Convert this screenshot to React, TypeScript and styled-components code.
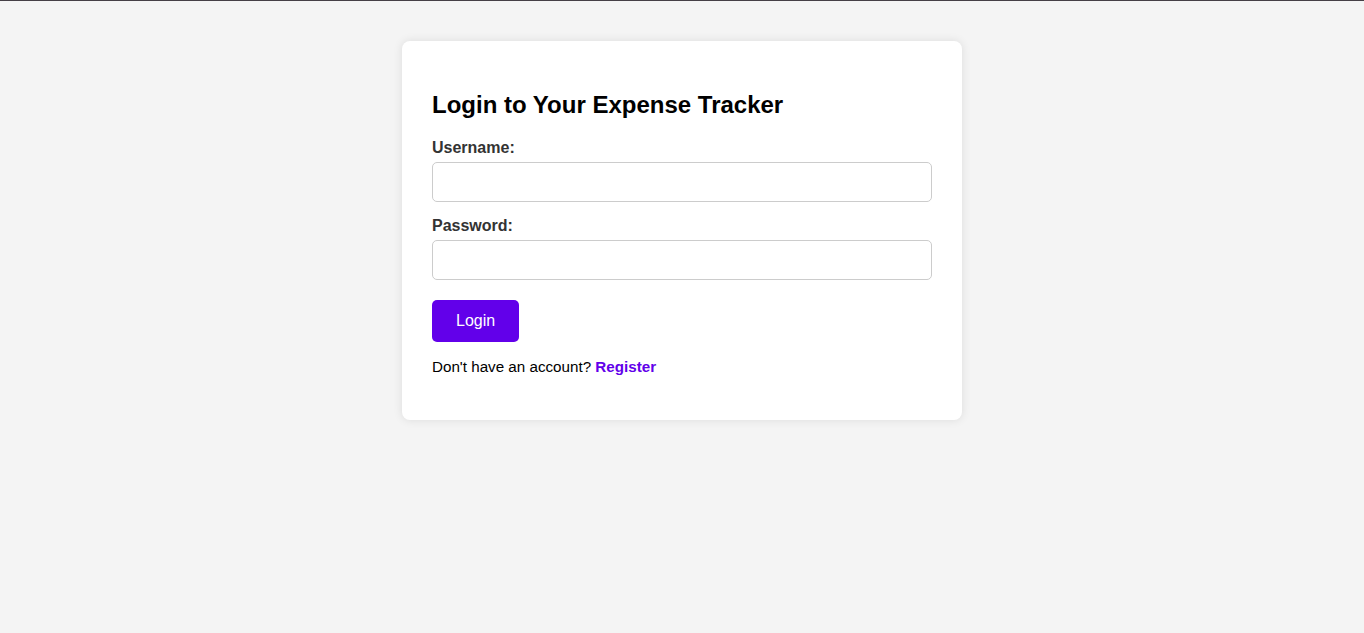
import styled, { createGlobalStyle } from "styled-components";

const GlobalStyle = createGlobalStyle`
  html, body {
    margin: 0;
    padding: 0;
    background: #f4f4f4;
    font-family: "Liberation Sans", Arial, sans-serif;
  }
  * {
    box-sizing: border-box;
  }
`;

const Page = styled.div`
  min-height: 633px;
  border-top: 1px solid #453f46;
  padding-top: 40px;
  display: flex;
  justify-content: center;
  align-items: flex-start;
`;

const Card = styled.div`
  width: 560px;
  background: #fff;
  border-radius: 8px;
  box-shadow: 0 0 10px rgba(0, 0, 0, 0.1);
  padding: 50px 30px 45px;
`;

const Title = styled.h2`
  margin: 0 0 20px;
  font-size: 24px;
  font-weight: bold;
  color: #000;
`;

const Field = styled.div`
  display: flex;
  flex-direction: column;
  margin-bottom: 15px;
`;

const Label = styled.label`
  font-size: 16px;
  font-weight: bold;
  color: #333;
  margin-bottom: 5px;
`;

const Input = styled.input`
  width: 100%;
  height: 40px;
  padding: 8px 10px;
  border: 1px solid #ccc;
  border-radius: 5px;
  font-size: 16px;
  font-family: inherit;
  outline: none;
`;

const Button = styled.button`
  margin-top: 5px;
  padding: 12px 24px;
  background: #6200ea;
  color: #fff;
  border: none;
  border-radius: 5px;
  font-size: 16px;
  font-family: inherit;
  line-height: 18px;
  cursor: pointer;
`;

const Note = styled.p`
  margin: 16px 0 0;
  font-size: 15.2px;
  color: #000;
`;

const RegisterLink = styled.a`
  color: #6200ea;
  font-weight: bold;
  text-decoration: none;
`;

export default function App() {
  return (
    <>
      <GlobalStyle />
      <Page>
        <Card>
          <Title>Login to Your Expense Tracker</Title>
          <form onSubmit={(e) => e.preventDefault()}>
            <Field>
              <Label htmlFor="username">Username:</Label>
              <Input id="username" type="text" />
            </Field>
            <Field>
              <Label htmlFor="password">Password:</Label>
              <Input id="password" type="password" />
            </Field>
            <Button type="submit">Login</Button>
          </form>
          <Note>
            Don't have an account? <RegisterLink href="#">Register</RegisterLink>
          </Note>
        </Card>
      </Page>
    </>
  );
}
